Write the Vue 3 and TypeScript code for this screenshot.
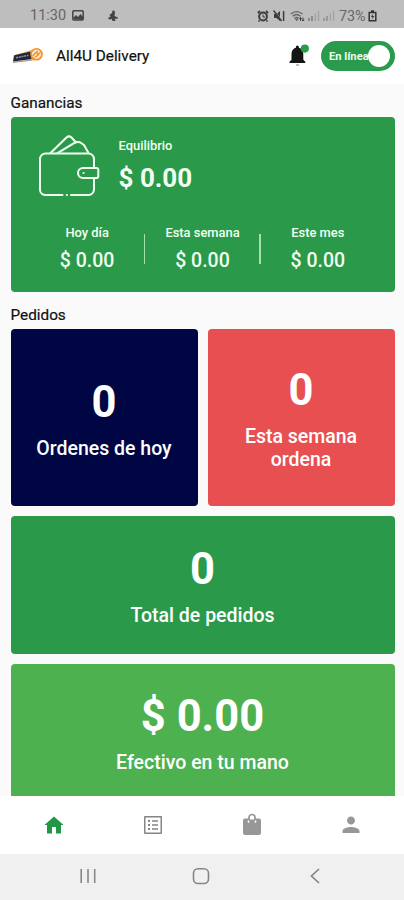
<script setup lang="ts">
interface Period {
  label: string
  amount: string
}

interface OrderCard {
  value: string
  label: string
  tone: string
}

const periods: Period[] = [
  { label: 'Hoy día', amount: '$ 0.00' },
  { label: 'Esta semana', amount: '$ 0.00' },
  { label: 'Este mes', amount: '$ 0.00' },
]

const cards: OrderCard[] = [
  { value: '0', label: 'Ordenes de hoy', tone: 'navy' },
  { value: '0', label: 'Esta semana ordena', tone: 'red' },
  { value: '0', label: 'Total de pedidos', tone: 'green wide' },
  { value: '$ 0.00', label: 'Efectivo en tu mano', tone: 'light wide' },
]
</script>

<template>
  <div class="phone">
    <div class="status">
      <span class="clock">11:30</span>
      <svg class="s-photo" width="12" height="11" viewBox="0 0 12 11">
        <rect x=".8" y=".8" width="10.4" height="9.2" rx="1" fill="none" stroke="#444" stroke-width="1.5" />
        <path d="M1.5 9V7.500L4 5l2 2 2.500-3L11 7v2.500z" fill="#444" />
      </svg>
      <svg class="s-app" width="12" height="12" viewBox="0 0 12 12" fill="#444">
        <path d="M5.500.5Q8 0 8 2.500L7.500 6 11 7.500 10 9 7.800 8.600 8.500 11H5.500L4.800 9 2 9.500 1 8 3.500 6.500 2.500 5 5 3z" />
      </svg>
      <span class="spacer"></span>
      <svg class="s-alarm" width="12" height="12" viewBox="0 0 12 12">
        <path d="M.8 3 3 1M11.200 3 9 1M2.500 10.500l-1 1M9.500 10.500l1 1" stroke="#3d3d3d" stroke-width="1.700" />
        <circle cx="6" cy="6.500" r="3.900" fill="none" stroke="#3d3d3d" stroke-width="2" />
        <path d="M6 4.500v2.500h2" fill="none" stroke="#3d3d3d" />
      </svg>
      <svg class="s-mute" width="12" height="12" viewBox="0 0 12 12">
        <path d="M1 4h2.500L7 1v10L3.500 8H1z" fill="#3d3d3d" />
        <path d="M1.200.200 8.500 9.500" stroke="#bebebe" stroke-width=".8" />
        <path d="M.5.500 8.500 11M10.600 1v10" stroke="#3d3d3d" stroke-width="1.500" />
      </svg>
      <svg class="s-wifi" width="15" height="12" viewBox="0 0 15 12" fill="none" stroke="#666">
        <path d="M.8 4Q6.500-.8 12.500 4M2.500 6.200q4-3.400 8 0M4.300 8.300q2.300-1.800 4.500 0" stroke-width="1.300" />
        <path d="m5.500 9 1.200 1.700L8 9z" fill="#555" />
        <path d="M10.500 7.500v3.500M13 11V7.500M9.300 9l1.200-1.500L11.500 9M12 9.500l1 1.500 1-1.500" stroke="#444" />
      </svg>
      <svg class="s-signal" width="12" height="11" viewBox="0 0 12 11">
        <path d="M1 8v3M4 6v5" stroke="#777" stroke-width="1.400" />
        <path d="M7.300 3.500V11M10.500 1v10" stroke="#a0a0a0" stroke-width="1.300" />
      </svg>
      <svg class="s-signal" width="12" height="11" viewBox="0 0 12 11">
        <path d="M1 8v3M4 6v5" stroke="#888" stroke-width="1.400" />
        <path d="M7.300 3.500V11M10.500 1v10" stroke="#a3a3a3" stroke-width="1.300" />
      </svg>
      <span class="percent">73%</span>
      <svg class="s-battery" width="9" height="12" viewBox="0 0 9 12">
        <path d="M3 1h3M1.200 2.500h6.600v8.300H1.200z" fill="none" stroke="#333" stroke-width="1.500" />
        <path d="M4.700 4 3 7h1.500L4 9.500 6.300 6H4.800z" fill="#333" />
      </svg>
    </div>

    <header class="header">
      <svg class="logo" width="32" height="18" viewBox="0 0 32 18">
        <path d="M1 8.500 20 2.800 29 8.200 22 13.500 1 15.500z" fill="#f8b96f" />
        <path d="M2.500 8.300 18.500 4.500 19.500 12 1 14.500z" fill="#202438" />
        <path d="M4 10.800 16.500 8.300" stroke="#8d93a5" stroke-width="1.600" stroke-dasharray="2 .8" />
        <path d="M1 15.300 20 13" stroke="#98a0b4" stroke-width="1.200" />
        <circle cx="24.500" cy="7.300" r="5.500" fill="#ffe3bd" stroke="#ef8f2b" stroke-width="1.600" />
        <path d="m20.500 9 4.500-4.500.5 3 3-2M22.500 10.500l4.500-3" fill="none" stroke="#ef8f2b" stroke-width="1.200" />
      </svg>
      <h1 class="title">All4U Delivery</h1>
      <span class="spacer"></span>
      <svg class="bell" width="22" height="24" viewBox="0 0 22 24">
        <path d="M1.500 19v-1.300l2-2V10c0-3.300 1.600-5.600 4.400-6.300V3a1.500 1.500 0 0 1 3 0v.7c2.800.7 4.400 3 4.400 6.300v5.700l2 2V19z" fill="#151515" />
        <path d="M7.700 20.200h3.600a1.800 1.800 0 0 1-3.600 0z" fill="#aaa" />
        <circle cx="16.800" cy="4.600" r="4.100" fill="#2a9b4c" />
      </svg>
      <button class="toggle" type="button"><span>En línea</span><i class="knob"></i></button>
    </header>

    <main class="content">
      <h2 class="section">Ganancias</h2>
      <section class="earnings">
        <div class="balance">
          <svg class="wallet" width="62" height="62" viewBox="0 0 62 62" fill="none" stroke="#effff0" stroke-width="2" stroke-linecap="round" stroke-linejoin="round">
            <path d="M23.500 60H6a5.500 5.500 0 0 1-5-5.500V24A5.500 5.500 0 0 1 6.500 18.500h43a5.500 5.500 0 0 1 5.500 5.500v8M55 44v10.500A5.500 5.500 0 0 1 49.500 60H32M27.800 60h.2" />
            <path d="M11.500 18 27.500 2.500q2.500-2.300 5 0L37 7.500M19 18 35.500 8q4-2 7 .2L45 10l4.500 8M18.500 18 37 6.800" />
            <path d="M44 33h13.500q1.800 0 1.800 1.800v6.400q0 1.800-1.800 1.800H44a5 5 0 0 1 0-10z" />
            <path d="M44.500 38h.1" />
          </svg>
          <div>
            <p class="balance-label">Equilibrio</p>
            <p class="balance-amount">$ 0.00</p>
          </div>
        </div>
        <div class="periods">
          <div v-for="p in periods" :key="p.label" class="period">
            <p class="period-label">{{ p.label }}</p>
            <p class="period-amount">{{ p.amount }}</p>
          </div>
        </div>
      </section>
      <h2 class="section orders">Pedidos</h2>
      <section class="grid">
        <article v-for="c in cards" :key="c.label" class="card" :class="c.tone">
          <p class="value">{{ c.value }}</p>
          <p class="caption">{{ c.label }}</p>
        </article>
      </section>
    </main>

    <nav class="tabs">
      <span class="tab"><svg width="22" height="24" viewBox="1 0 22 24" fill="#219845"><path d="M10 20.500V14h4v6.500h5V12h2.500L12 3.500 2.500 12H5v8.500z" /></svg></span>
      <span class="tab"><svg width="24" height="24" viewBox="0 0 24 24" fill="#858585"><path d="M19.500 4.500v15h-15v-15h15m.6-1.500H3.900c-.5 0-.9.400-.9.900v16.200c0 .4.400.9.900.9h16.200c.4 0 .9-.5.900-.9V3.900c0-.5-.5-.9-.9-.9zM11 7.200h6v1.500h-6zM11 11.200h6v1.500h-6zM11 15.200h6v1.500h-6zM7 7h2v2H7zm0 4h2v2H7zm0 4h2v2H7z" /></svg></span>
      <span class="tab"><svg width="24" height="24" viewBox="0 0 24 24">
        <path d="M5 5.500h14a2 2 0 0 1 2 2V20a2 2 0 0 1-2 2H5a2 2 0 0 1-2-2V7.500a2 2 0 0 1 2-2z" fill="#979797" />
        <path d="M9 7V4.500a3 3 0 0 1 6 0V7" fill="none" stroke="#979797" stroke-width="1.700" />
        <path d="M8.500 7.500v2.200M15.500 7.500v2.200M10 5.800h4" fill="none" stroke="#fff" stroke-width="1.500" />
      </svg></span>
      <span class="tab"><svg width="24" height="24" viewBox="0 0 24 24" fill="#979797"><path d="M12 11.500c2.210 0 4-1.790 4-4s-1.790-4-4-4-4 1.790-4 4 1.790 4 4 4zm0 2.500c-2.670 0-8.500 1.340-8.500 4v2h17v-2c0-2.660-5.830-4-8.500-4z" /></svg></span>
    </nav>

    <div class="system">
      <svg width="18" height="18" viewBox="0 0 18 18" stroke="#888" stroke-width="1.600"><path d="M2.200 2v14M9 2v14M15.700 2v14" /></svg>
      <svg width="18" height="18" viewBox="0 0 18 18" fill="none" stroke="#858585" stroke-width="1.600"><rect x="1.500" y="1.700" width="15" height="14.800" rx="4.500" /></svg>
      <svg width="18" height="18" viewBox="0 0 18 18" fill="none" stroke="#858585" stroke-width="1.700"><path d="m13 2-7.500 7 7.500 7" /></svg>
    </div>
  </div>
</template>

<style>
body {
  margin: 0;
  overflow: hidden;
}
</style>

<style scoped>
.phone {
  display: flex;
  flex-direction: column;
  width: 404px;
  height: 900px;
  overflow: hidden;
  background: #fafafa;
  font-family: Roboto, "Liberation Sans", sans-serif;
  color: #222;
}
p, h1, h2 {
  margin: 0;
}
svg {
  display: block;
  flex: none;
}
.spacer {
  flex: 1;
}
.status {
  display: flex;
  align-items: center;
  flex: none;
  box-sizing: border-box;
  height: 28px;
  padding: 3px 27px 0 30px;
  background: #bebebe;
  color: #666;
}
.clock {
  width: 41.500px;
  font-size: 14.500px;
}
.s-app { margin-left: 23px; }
.s-mute { margin-left: 4px; }
.s-wifi { margin-left: 5px; }
.s-signal { margin-left: 3px; }
.percent {
  width: 29px;
  margin-left: 4px;
  font-size: 14.300px;
}
.header {
  display: flex;
  align-items: center;
  flex: none;
  box-sizing: border-box;
  height: 56px;
  padding: 0 9px 0 12px;
  background: #fff;
}
.logo {
  margin-bottom: 1px;
}
.title {
  margin-left: 12px;
  font-size: 15.300px;
  font-weight: 400;
  line-height: 20px;
  color: #111;
  -webkit-text-stroke: .2px #111;
}
.bell {
  margin-right: 11px;
}
.toggle {
  display: flex;
  align-items: center;
  justify-content: space-between;
  box-sizing: border-box;
  width: 74px;
  height: 30px;
  padding: 0 5px 0 8px;
  border: 0;
  border-radius: 15px;
  background: #2a9b4c;
  color: #e9ffeb;
  font: 700 11.200px Roboto, sans-serif;
  white-space: nowrap;
}
.toggle span {
  width: 39px;
  overflow: hidden;
  text-align: left;
}
.knob {
  flex: none;
  width: 22px;
  height: 22px;
  border-radius: 50%;
  background: #fff;
}
.content {
  flex: none;
  box-sizing: border-box;
  height: 712px;
  padding: 9px 9.500px 0 10.500px;
  overflow: hidden;
}
.section {
  height: 24px;
  font-size: 15.300px;
  font-weight: 400;
  line-height: 20px;
  color: #111;
  -webkit-text-stroke: .2px #111;
}
.earnings {
  box-sizing: border-box;
  height: 175px;
  padding-top: 18px;
  border-radius: 4px;
  background: #2a9a4a;
  color: #f1fff1;
}
.balance {
  display: flex;
  gap: 18px;
  padding-left: 28px;
}
.balance-label {
  padding-top: 3px;
  font-size: 12.900px;
  font-weight: 500;
  line-height: 16px;
}
.balance-amount {
  margin-top: 8px;
  font-size: 26px;
  font-weight: 700;
  line-height: 32px;
}
.periods {
  display: flex;
  padding: 0 19px;
  margin-top: 28px;
}
.period {
  flex: 1;
  position: relative;
  text-align: center;
}
.period + .period::before {
  content: "";
  position: absolute;
  left: -1px;
  top: 9px;
  width: 1.500px;
  height: 30px;
  background: #a5dfac;
}
.period-label {
  font-size: 12.900px;
  font-weight: 500;
  line-height: 16px;
}
.period-amount {
  margin-top: 8px;
  font-size: 19.500px;
  font-weight: 500;
  line-height: 24px;
}
.orders {
  margin-top: 13px;
}
.grid {
  display: grid;
  grid-template-columns: 1fr 1fr;
  grid-template-rows: 177px 137.500px 137px;
  gap: 10px;
}
.card {
  display: flex;
  flex-direction: column;
  align-items: center;
  justify-content: center;
  padding: 1px 30px 0;
  border-radius: 4px;
  color: #fff;
  text-align: center;
}
.navy {
  padding: 1px 10px 0;
  background: #000643;
}
.red { background: #e84f51; }
.green { background: #2a9a4a; }
.light { background: #4db150; }
.wide { grid-column: span 2; }
.value {
  font-size: 43.500px;
  font-weight: 700;
  line-height: 52px;
}
.caption {
  margin-top: 8px;
  font-size: 19.500px;
  font-weight: 500;
  line-height: 23px;
}
.tabs {
  display: flex;
  align-items: center;
  flex: none;
  height: 58px;
  padding: 0 4px;
  background: #fff;
}
.tab {
  display: flex;
  flex: 1;
  justify-content: center;
}
.system {
  display: flex;
  align-items: center;
  justify-content: space-around;
  flex: none;
  height: 46px;
  padding: 0 32px 0 31px;
  background: #f0f0f0;
}
.system svg {
  margin-top: -2px;
}
</style>
